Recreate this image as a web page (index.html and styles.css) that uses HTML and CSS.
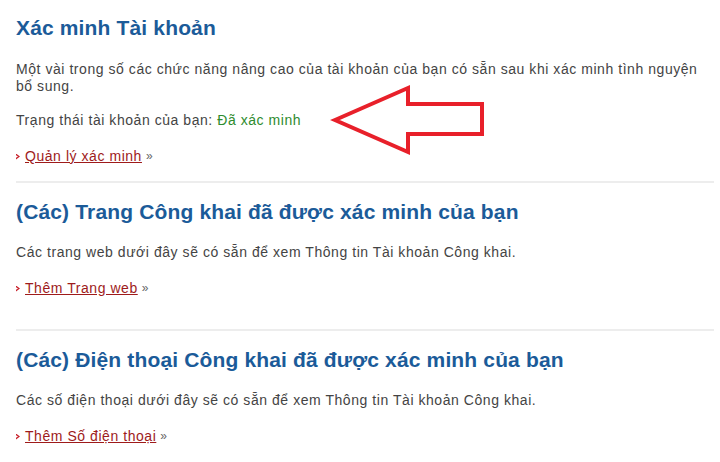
FILE: index.html
```html
<!DOCTYPE html>
<html lang="vi">
<head>
<meta charset="utf-8">
<link rel="stylesheet" href="styles.css">
</head>
<body>
<div class="page">
  <section class="block block-first">
    <h2 class="title">Xác minh Tài khoản</h2>
    <p class="text text-lead">Một vài trong số các chức năng nâng cao của tài khoản của bạn có sẵn sau khi xác minh tình nguyện bổ sung.</p>
    <p class="text">Trạng thái tài khoản của bạn: <span class="ok">Đã xác minh</span></p>
    <p class="more"><span class="bullet"></span><a class="link" href="#">Quản lý xác minh</a> <span class="raquo">»</span></p>
    <svg class="arrow" width="160" height="96" viewBox="0 0 160 96" aria-hidden="true">
      <polygon points="5,56 78,24 78,40 152,40 152,70 78,70 78,88" fill="none" stroke="#e8202a" stroke-width="4" stroke-linejoin="miter"/>
    </svg>
  </section>
  <section class="block">
    <h2 class="title">(Các) Trang Công khai đã được xác minh của bạn</h2>
    <p class="text">Các trang web dưới đây sẽ có sẵn để xem Thông tin Tài khoản Công khai.</p>
    <p class="more"><span class="bullet"></span><a class="link" href="#">Thêm Trang web</a> <span class="raquo">»</span></p>
  </section>
  <section class="block">
    <h2 class="title">(Các) Điện thoại Công khai đã được xác minh của bạn</h2>
    <p class="text">Các số điện thoại dưới đây sẽ có sẵn để xem Thông tin Tài khoản Công khai.</p>
    <p class="more"><span class="bullet"></span><a class="link" href="#">Thêm Số điện thoại</a> <span class="raquo">»</span></p>
  </section>
</div>
</body>
</html>
```

FILE: styles.css
```css
html, body {
  margin: 0;
  padding: 0;
  background: #ffffff;
}
body {
  font-family: "Liberation Sans", Arial, sans-serif;
  color: #444444;
}
.page {
  padding: 16px 6px 0 16px;
}
.block {
  position: relative;
  padding-bottom: 16px;
  border-bottom: 2px solid #ededed;
  margin-bottom: 17px;
}
.block + .block {
  padding-bottom: 32px;
}
.block:last-child {
  border-bottom: none;
  padding-bottom: 0;
  margin-bottom: 0;
}
.title {
  margin: 0;
  font-size: 21px;
  line-height: 24px;
  font-weight: bold;
  letter-spacing: 0.15px;
  color: #1b5b99;
}
.text {
  margin: 20px 0 0;
  font-size: 14px;
  line-height: 17px;
  letter-spacing: 0.55px;
  color: #444444;
}
.text-lead {
  margin-top: 21px;
}
.text + .text {
  margin-top: 17px;
}
.ok {
  color: #2e8b2e;
}
.more {
  margin: 19px 0 0;
  font-size: 14px;
  line-height: 17px;
  letter-spacing: 0.55px;
  display: flex;
  align-items: center;
}
.bullet {
  width: 4px;
  height: 6px;
  margin-right: 5px;
  background: #c8202a;
  clip-path: polygon(0 0, 100% 50%, 0 100%, 0 70%, 50% 50%, 0 30%);
}
.link {
  color: #9e1b1b;
  text-decoration: underline;
}
.raquo {
  margin-left: 4px;
  color: #666666;
  font-size: 12px;
}
.arrow {
  position: absolute;
  left: 314px;
  top: 48px;
}
```
